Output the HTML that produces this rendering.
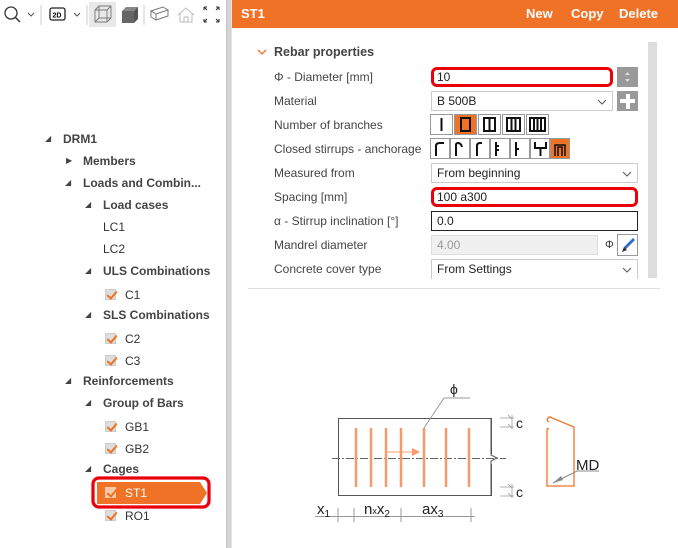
<!DOCTYPE html>
<html><head><meta charset="utf-8"><style>
*{margin:0;padding:0;box-sizing:border-box}
body{width:678px;height:548px;overflow:hidden;background:#fff;font-family:"Liberation Sans",sans-serif;font-size:12px;color:#333;position:relative}
.a{position:absolute}
.t{position:absolute;white-space:nowrap;line-height:14px}
.b{font-weight:bold;color:#444}
.lbl{position:absolute;left:274px;white-space:nowrap;color:#444;line-height:14px}
.inp{position:absolute;left:431px;width:207px;height:20px;border:1px solid #ccc;background:#fff;padding-left:5px;line-height:18px;color:#222}
.chev{position:absolute;right:5px;top:7px;width:10px;height:6px}
.cb{position:absolute;width:11px;height:11px;background:#ddd;border:1px solid #ccc}
.cb:after{content:"";position:absolute;left:3px;top:-1px;width:4px;height:8px;border-right:2px solid #f07020;border-bottom:2px solid #f07020;transform:rotate(40deg)}
.tri{position:absolute;font-size:8px;color:#444}
</style></head><body>
<svg class="a" style="left:0;top:0" width="227" height="30">
<circle cx="11" cy="13" r="6" fill="none" stroke="#333" stroke-width="1.3"/><line x1="15" y1="17" x2="20" y2="22" stroke="#333" stroke-width="1.5"/>
<path d="M28 13l3 3 3-3" fill="none" stroke="#555"/>
<line x1="41" y1="5" x2="41" y2="25" stroke="#ccc"/>
<rect x="50" y="8" width="15" height="12" rx="2" fill="none" stroke="#222" stroke-width="1.3"/><text x="52.5" y="17.5" font-size="7" font-weight="bold" font-family="Liberation Sans">2D</text>
<path d="M74 13l3 3 3-3" fill="none" stroke="#555"/>
<line x1="87" y1="5" x2="87" y2="25" stroke="#ccc"/>
<rect x="89" y="2" width="27" height="25" fill="#e8e8e8"/>
<path d="M95 10h12v12h-12z M95 10l4-4h12v12l-4 4 M107 10l4-4 M99 6v12h12 M95 22l4-4" fill="none" stroke="#777" stroke-width="0.9"/>
<path d="M122 11h12v12h-12z" fill="#666"/><path d="M122 11l4-4h12l-4 4z" fill="#888"/><path d="M134 11l4-4v12l-4 4z" fill="#555"/>
<line x1="144" y1="5" x2="144" y2="25" stroke="#ccc"/>
<path d="M151 11l12-4 5 3-12 4z M151 11v6l5 3v-6 M156 20l12-4v-6" fill="none" stroke="#777"/>
<path d="M178 15l8-7 8 7 M180 14v8h12v-8 M184 22v-5h4v5" fill="none" stroke="#bbb"/>
<path d="M204 7h3M204 7v3 M219 7h-3M219 7v3 M204 22h3M204 22v-3 M219 22h-3M219 22v-3 M204 7l3 3 M219 7l-3 3 M204 22l3-3 M219 22l-3-3" fill="none" stroke="#333" stroke-width="1.1"/>
</svg>
<div class="a" style="left:226px;top:0;width:6px;height:548px;background:#d4d4d4;border-left:1px solid #c4c4c4;border-right:1px solid #e2e2e2"></div>
<span class="tri" style="left:45px;top:134px">◢</span><span class="t b" style="left:63px;top:132px">DRM1</span>
<span class="tri" style="left:66px;top:156px">▶</span><span class="t b" style="left:83px;top:154px">Members</span>
<span class="tri" style="left:65px;top:178px">◢</span><span class="t b" style="left:83px;top:176px">Loads and Combin...</span>
<span class="tri" style="left:85px;top:200px">◢</span><span class="t b" style="left:103px;top:198px">Load cases</span>
<span class="t" style="left:103px;top:220px">LC1</span>
<span class="t" style="left:103px;top:242px">LC2</span>
<span class="tri" style="left:85px;top:266px">◢</span><span class="t b" style="left:103px;top:264px">ULS Combinations</span>
<div class="cb" style="left:105px;top:289px"></div><span class="t" style="left:125px;top:288px">C1</span>
<span class="tri" style="left:85px;top:310px">◢</span><span class="t b" style="left:103px;top:308px">SLS Combinations</span>
<div class="cb" style="left:105px;top:333px"></div><span class="t" style="left:125px;top:332px">C2</span>
<div class="cb" style="left:105px;top:355px"></div><span class="t" style="left:125px;top:354px">C3</span>
<span class="tri" style="left:65px;top:376px">◢</span><span class="t b" style="left:83px;top:374px">Reinforcements</span>
<span class="tri" style="left:85px;top:398px">◢</span><span class="t b" style="left:103px;top:396px">Group of Bars</span>
<div class="cb" style="left:105px;top:421px"></div><span class="t" style="left:125px;top:420px">GB1</span>
<div class="cb" style="left:105px;top:443px"></div><span class="t" style="left:125px;top:442px">GB2</span>
<span class="tri" style="left:85px;top:464px">◢</span><span class="t b" style="left:103px;top:462px">Cages</span>
<svg class="a" style="left:90px;top:476px" width="124" height="34"><path d="M7 6h103l7 11-7 11h-103z" fill="#f07226"/><rect x="3" y="2" width="116" height="29" rx="6" fill="none" stroke="#e8000a" stroke-width="3.2"/></svg>
<div class="cb" style="left:105px;top:487px;background:#f6c9a9;border-color:#f6c9a9"></div><span class="t" style="left:125px;top:486px;color:#fff">ST1</span>
<div class="cb" style="left:105px;top:510px"></div><span class="t" style="left:125px;top:509px">RO1</span>
<div class="a" style="left:232px;top:0;width:446px;height:28px;background:#f07226"></div>
<span class="t" style="left:241px;top:7px;color:#fff;font-weight:bold;font-size:13px">ST1</span>
<span class="t" style="left:526px;top:7px;color:#fff;font-weight:bold;font-size:13px">New</span>
<span class="t" style="left:571px;top:7px;color:#fff;font-weight:bold;font-size:13px">Copy</span>
<span class="t" style="left:619px;top:7px;color:#fff;font-weight:bold;font-size:13px">Delete</span>
<div class="a" style="left:648px;top:42px;width:9px;height:236px;background:#ddd"></div>
<svg class="a" style="left:257px;top:48px" width="10" height="8"><path d="M1 2l4 4 4-4" fill="none" stroke="#f07226" stroke-width="1.3"/></svg>
<span class="t b" style="left:274px;top:45px;font-size:12.5px">Rebar properties</span>
<span class="lbl" style="top:70px">Φ - Diameter [mm]</span>
<span class="lbl" style="top:94px">Material</span>
<span class="lbl" style="top:118px">Number of branches</span>
<span class="lbl" style="top:142px">Closed stirrups - anchorage</span>
<span class="lbl" style="top:166px">Measured from</span>
<span class="lbl" style="top:190px">Spacing [mm]</span>
<span class="lbl" style="top:214px">α - Stirrup inclination [°]</span>
<span class="lbl" style="top:238px">Mandrel diameter</span>
<span class="lbl" style="top:262px">Concrete cover type</span>
<div class="inp" style="top:67px;width:182px;border:3px solid #e8000a;border-radius:6px;line-height:14px;padding-left:3px">10</div>
<div class="a" style="left:617px;top:67px;width:21px;height:20px;background:#999"><svg width="21" height="20"><path d="M8 8l2.5-3 2.5 3zM8 12l2.5 3 2.5-3z" fill="#ddd"/></svg></div>
<div class="inp" style="top:91px;width:182px">B 500B<svg class="chev" viewBox="0 0 10 6"><path d="M1 1l4 4 4-4" fill="none" stroke="#555"/></svg></div>
<div class="a" style="left:617px;top:91px;width:21px;height:20px;background:#999"><div class="a" style="left:3px;top:8px;width:15px;height:4px;background:#fff"></div><div class="a" style="left:8.5px;top:3px;width:4px;height:15px;background:#fff"></div></div>
<svg class="a" style="left:430px;top:114px" width="130" height="22">
<g fill="#fff" stroke="#999"><rect x="0.5" y="0.5" width="22" height="20"/><rect x="24.5" y="0.5" width="22" height="20" fill="#f07226"/><rect x="48.5" y="0.5" width="22" height="20"/><rect x="72.5" y="0.5" width="22" height="20"/><rect x="96.5" y="0.5" width="22" height="20"/></g>
<g stroke="#111" stroke-width="2" fill="none"><line x1="11.5" y1="4" x2="11.5" y2="17"/><rect x="31" y="4" width="9" height="13"/><rect x="54" y="4" width="11" height="13"/><line x1="59.5" y1="4" x2="59.5" y2="17"/><rect x="77" y="4" width="13" height="13"/><line x1="81.5" y1="4" x2="81.5" y2="17"/><line x1="85.5" y1="4" x2="85.5" y2="17"/><rect x="100" y="4" width="15" height="13"/><line x1="104" y1="4" x2="104" y2="17"/><line x1="107.5" y1="4" x2="107.5" y2="17"/><line x1="111" y1="4" x2="111" y2="17"/></g></svg>
<svg class="a" style="left:430px;top:138px" width="145" height="22">
<g fill="#fff" stroke="#999"><rect x="0.5" y="0.5" width="19" height="20"/><rect x="20.5" y="0.5" width="19" height="20"/><rect x="40.5" y="0.5" width="19" height="20"/><rect x="60.5" y="0.5" width="19" height="20"/><rect x="80.5" y="0.5" width="19" height="20"/><rect x="100.5" y="0.5" width="19" height="20"/><rect x="120.5" y="0.5" width="19" height="20" fill="#f07226"/></g>
<g stroke="#111" stroke-width="2" fill="none"><path d="M6 18V8q0-3 4-3h4"/><path d="M26 18V7q0-2 2-2q3 0 4 4"/><path d="M47 18V8q0-3 3-3h2"/><path d="M66 4v14M66 8h3M66 12h3"/><path d="M86 4v14M86 11h3"/><path d="M105 4v6h11V4M110.5 10v8"/><path d="M125 18V7h10v11M128 18V9h4v9" stroke-width="1.5"/></g></svg>
<div class="inp" style="top:163px">From beginning<svg class="chev" viewBox="0 0 10 6"><path d="M1 1l4 4 4-4" fill="none" stroke="#555"/></svg></div>
<div class="inp" style="top:187px;border:3px solid #e8000a;border-radius:6px;line-height:14px;padding-left:3px">100 a300</div>
<div class="inp" style="top:211px;border-color:#222">0.0</div>
<div class="inp" style="top:235px;width:167px;background:#f0f0f0;color:#999;border-color:#ddd">4.00</div>
<span class="t" style="left:605px;top:238px;font-size:11px">Φ</span>
<div class="a" style="left:617px;top:234px;width:21px;height:22px;border:1px solid #999;background:#fff"><svg width="19" height="20"><path d="M4 17l2-5 9-9 2 2-9 9z" fill="#2a6fc0"/><path d="M4 17l2-5 3 3z" fill="#333"/></svg></div>
<div class="inp" style="top:259px;border-bottom:none">From Settings<svg class="chev" viewBox="0 0 10 6"><path d="M1 1l4 4 4-4" fill="none" stroke="#555"/></svg></div>
<div class="a" style="left:248px;top:288px;width:412px;height:1px;background:#ddd"></div>
<svg class="a" style="left:300px;top:370px" width="300" height="160" font-family="Liberation Sans">
<rect x="38.5" y="48.5" width="153" height="77" fill="none" stroke="#555"/>
<rect x="186" y="84" width="8" height="10" fill="#fff"/>
<path d="M191 48v37l6 3-6 3v35" fill="none" stroke="#555"/>
<line x1="32" y1="88.5" x2="206" y2="88.5" stroke="#666" stroke-dasharray="8 2 2 2"/>
<g stroke="#f59a6a" stroke-width="2.5"><line x1="56" y1="58" x2="56" y2="117"/><line x1="71" y1="58" x2="71" y2="117"/><line x1="86" y1="58" x2="86" y2="117"/><line x1="101" y1="58" x2="101" y2="117"/><line x1="124" y1="58" x2="124" y2="117"/><line x1="146" y1="58" x2="146" y2="117"/><line x1="169" y1="58" x2="169" y2="117"/></g>
<path d="M86 82h26" stroke="#f59a6a"/><path d="M112 78l8 4-8 4z" fill="#f59a6a"/>
<path d="M124 58l20-30h26" fill="none" stroke="#999"/>
<text x="150" y="24" font-size="14" fill="#222">ϕ</text>
<path d="M200 48h14M200 57h14M208 45l4 4M208 54l4 4M212 45v14" fill="none" stroke="#999" stroke-width="0.8"/>
<text x="216" y="58" font-size="14" fill="#222">c</text>
<path d="M200 117h14M200 126h14M208 114l4 4M208 123l4 4M212 114v14" fill="none" stroke="#999" stroke-width="0.8"/>
<text x="216" y="127" font-size="14" fill="#222">c</text>
<path d="M249 52q-3-2 -1-4q2-2 4 0l22 9v59h-27v-56q0-2 2-1" fill="none" stroke="#f07226" stroke-width="1.3"/>
<path d="M253 113l24-12h22" fill="none" stroke="#888"/><path d="M253 113l8-7 2 4z" fill="#888"/>
<text x="276" y="100" font-size="15" fill="#222">MD</text>
<line x1="15" y1="146.5" x2="175" y2="146.5" stroke="#999"/>
<g stroke="#999"><line x1="38" y1="138" x2="38" y2="152"/><line x1="54" y1="138" x2="54" y2="152"/><line x1="101" y1="138" x2="101" y2="152"/><line x1="171" y1="138" x2="171" y2="152"/></g>
<text x="17" y="144" font-size="15" fill="#222">x<tspan font-size="10" dy="3">1</tspan></text>
<text x="64" y="144" font-size="15" fill="#222">n<tspan font-size="9">x</tspan>x<tspan font-size="10" dy="3">2</tspan></text>
<text x="122" y="144" font-size="15" fill="#222">ax<tspan font-size="10" dy="3">3</tspan></text>
</svg>
</body></html>
